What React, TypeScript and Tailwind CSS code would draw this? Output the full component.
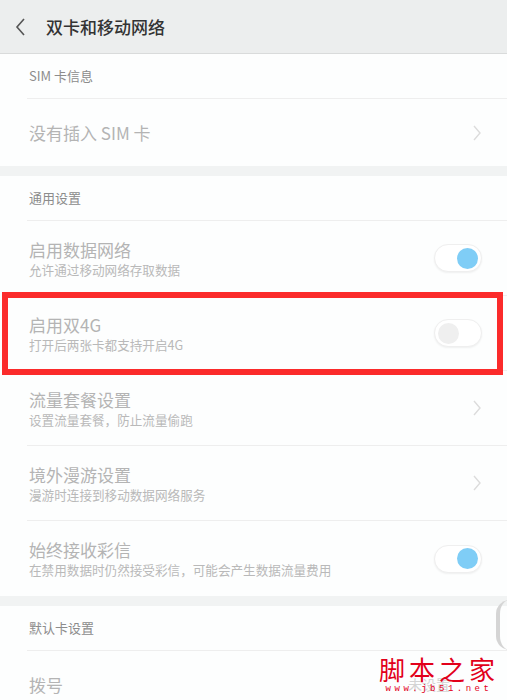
import React from "react";

const font = { fontFamily: '"Noto Sans CJK SC", "Noto Sans", sans-serif' };

function Chevron() {
  return (
    <svg width="10" height="18" viewBox="0 0 10 18" className="shrink-0">
      <path d="M2 2 L8 9 L2 16" fill="none" stroke="#dcdcdc" strokeWidth="1.4" />
    </svg>
  );
}

function Toggle({ on }: { on: boolean }) {
  return (
    <div className="flex h-[28px] w-[48px] shrink-0 items-center rounded-full border border-[#efefef] bg-white px-[3px] shadow-[0_1px_2px_rgba(0,0,0,0.06)]">
      <div
        className={
          on
            ? "ml-auto h-[21px] w-[21px] rounded-full bg-[#7fcdf6]"
            : "h-[21px] w-[21px] rounded-full bg-[#efefef]"
        }
      />
    </div>
  );
}

function SectionHeader({ label }: { label: string }) {
  return (
    <div className="flex h-[45px] items-center border-b border-[#eeeeee] ml-[27px] pl-[2px]">
      <span className="text-[13px] text-[#8c8c8c]">{label}</span>
    </div>
  );
}

type RowProps = {
  title: string;
  sub?: string;
  right: "chevron" | "on" | "off" | "none";
  divider?: boolean;
  extra?: React.ReactNode;
};

function Row({ title, sub, right, divider = true, extra }: RowProps) {
  return (
    <div
      className={
        "flex items-center ml-[27px] pl-[2px] pr-[25px] " +
        (sub ? "h-[75px] " : "h-[67px] ") +
        (divider ? "border-b border-[#eeeeee]" : "")
      }
    >
      <div className="flex flex-1 flex-col">
        <span className="text-[17px] leading-[22px] text-[#b4b4b4]">{title}</span>
        {sub && <span className="mt-[1px] text-[12.6px] leading-[16px] text-[#b9b9b9]">{sub}</span>}
      </div>
      {extra}
      {right === "chevron" && <Chevron />}
      {right === "on" && <Toggle on />}
      {right === "off" && <Toggle on={false} />}
    </div>
  );
}

export default function App() {
  return (
    <div className="relative h-[700px] w-[507px] overflow-hidden bg-[#fdfefe]" style={font}>
      {/* header */}
      <div className="flex h-[54px] items-center border-b border-[#d9dbdb] bg-[#eceeee]">
        <svg width="12" height="20" viewBox="0 0 12 20" className="ml-[14px]">
          <path d="M10 2 L3 10 L10 18" fill="none" stroke="#555" strokeWidth="1.6" />
        </svg>
        <span className="ml-[20px] text-[17px] font-medium text-[#333]">双卡和移动网络</span>
      </div>

      <SectionHeader label="SIM 卡信息" />
      <Row title="没有插入 SIM 卡" right="chevron" divider={false} />

      <div className="h-[10px] bg-[#f1f3f3]" />

      <SectionHeader label="通用设置" />
      <Row title="启用数据网络" sub="允许通过移动网络存取数据" right="on" />
      <Row title="启用双4G" sub="打开后两张卡都支持开启4G" right="off" />
      <Row title="流量套餐设置" sub="设置流量套餐，防止流量偷跑" right="chevron" />
      <Row title="境外漫游设置" sub="漫游时连接到移动数据网络服务" right="chevron" />
      <Row title="始终接收彩信" sub="在禁用数据时仍然接受彩信，可能会产生数据流量费用" right="on" divider={false} />

      <div className="h-[10px] bg-[#f1f3f3]" />

      <SectionHeader label="默认卡设置" />
      <Row
        title="拨号"
        right="none"
        divider={false}
        extra={<span className="mr-[32px] text-[14px] text-[#d4d4d4]">未设置</span>}
      />

      {/* red annotation box */}
      <div className="pointer-events-none absolute left-[2px] top-[292px] h-[83px] w-[501px] border-[6px] border-[#fb2b2b]" />

      {/* scroll indicator */}
      <div className="absolute left-[496px] top-[600px] h-[50px] w-[14px] rounded-l-full border-l-[4px] border-[#d5d5d5]" />

      {/* watermark */}
      <div className="absolute left-[380px] top-[654px] flex w-[118px] flex-col items-center whitespace-nowrap">
        <span className="text-[26px] leading-[30px] tracking-[4px] text-[#e2001a]" style={{ fontFamily: '"Noto Sans CJK SC", serif' }}>
          脚本之家
        </span>
        <span className="text-[9px] leading-[11px] tracking-[3.5px] text-[#e2001a]" style={{ fontFamily: '"Liberation Mono", monospace' }}>
          www.jb51.net
        </span>
      </div>
    </div>
  );
}
